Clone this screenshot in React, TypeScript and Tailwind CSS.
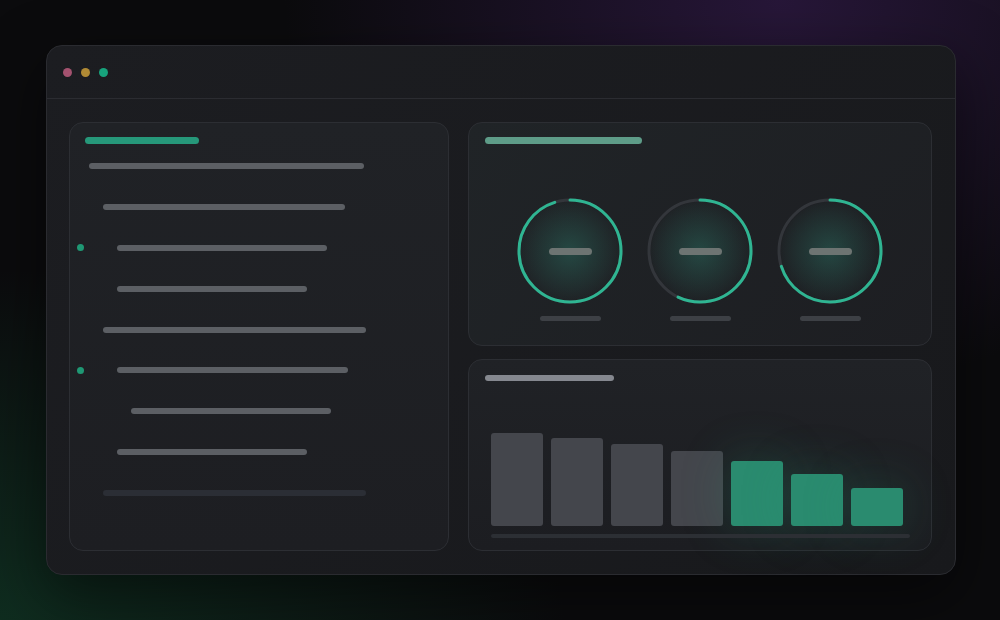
const rows = [
    { indent: 0, width: 275, dot: false },
    { indent: 14, width: 242, dot: false },
    { indent: 28, width: 210, dot: true },
    { indent: 28, width: 190, dot: false },
    { indent: 14, width: 263, dot: false },
    { indent: 28, width: 231, dot: true },
    { indent: 42, width: 200, dot: false },
    { indent: 28, width: 190, dot: false },
    { indent: 14, width: 263, dot: false, faint: true },
];

const rings = [0.95, 0.57, 0.7];

const bars = [
    { h: 93, green: false },
    { h: 88, green: false },
    { h: 82, green: false },
    { h: 75, green: false },
    { h: 65, green: true },
    { h: 52, green: true },
    { h: 38, green: true },
];

function Ring({ value }: { value: number }) {
    const r = 51;
    const c = 2 * Math.PI * r;
    return (
        <div className="relative w-[106px] h-[106px]">
            <div className="absolute inset-[4px] rounded-full bg-[radial-gradient(circle,rgba(45,125,108,0.42),rgba(45,120,105,0.12)_55%,transparent_75%)]" />
            <svg width="106" height="106" viewBox="0 0 106 106" className="absolute inset-0 -rotate-90">
                <circle cx="53" cy="53" r={r} fill="none" stroke="#33363b" strokeWidth="3" />
                <circle
                    cx="53"
                    cy="53"
                    r={r}
                    fill="none"
                    stroke="#2fb592"
                    strokeWidth="3"
                    strokeDasharray={`${c * value} ${c}`}
                    strokeLinecap="round"
                />
            </svg>
            <div className="absolute inset-0 flex items-center justify-center">
                <div className="w-[43px] h-[7px] rounded-full bg-[#6d7472]" />
            </div>
        </div>
    );
}

export default function App() {
    return (
        <div className="w-[1000px] h-[620px] overflow-hidden bg-[#0b0b0d] bg-[radial-gradient(ellipse_at_78%_0%,rgba(62,32,92,0.55),transparent_45%),radial-gradient(ellipse_at_0%_100%,rgba(18,72,46,0.55),transparent_40%)] pt-[45px] pl-[46px]">
            <div className="w-[910px] h-[530px] rounded-[16px] border border-[#2a2b30] bg-[#1a1b1e] bg-[linear-gradient(135deg,#1c1d21,#18191c)] flex flex-col shadow-[0_20px_60px_rgba(0,0,0,0.5)]">
                {/* title bar */}
                <div className="h-[53px] shrink-0 border-b border-[#2b2c31] flex items-center gap-[9px] pl-[16px]">
                    <div className="w-[9px] h-[9px] rounded-full bg-[#a4526f]" />
                    <div className="w-[9px] h-[9px] rounded-full bg-[#b08a35]" />
                    <div className="w-[9px] h-[9px] rounded-full bg-[#17a37c]" />
                </div>

                <div className="flex-1 grid grid-cols-[380px_464px] gap-[19px] pt-[23px] pl-[22px]">
                    {/* left panel */}
                    <div className="h-[429px] rounded-[14px] border border-[#2c2e33] bg-[#1f2024] bg-[linear-gradient(180deg,#202226,#1d1e22)] pt-[14px]">
                        <div className="ml-[15px] w-[114px] h-[7px] rounded-full bg-[#26987a]" />
                        <div className="mt-[2px] flex flex-col">
                            {rows.map((row, i) => (
                                <div key={i} className="h-[40.8px] flex items-center">
                                    <div className="w-[19px] shrink-0 flex pl-[7px]">
                                        {row.dot && <div className="w-[7px] h-[7px] rounded-full bg-[#1f9874]" />}
                                    </div>
                                    <div
                                        className={`h-[6px] rounded-full ${row.faint ? "bg-[#2b2e35]" : "bg-[#5c5f64]"}`}
                                        style={{ marginLeft: row.indent, width: row.width }}
                                    />
                                </div>
                            ))}
                        </div>
                    </div>

                    {/* right column */}
                    <div className="flex flex-col gap-[13px]">
                        <div className="h-[224px] rounded-[14px] border border-[#2c2e33] bg-[#1f2125] bg-[linear-gradient(135deg,#202427,#1d1e22)] pt-[14px]">
                            <div className="ml-[16px] w-[157px] h-[7px] rounded-full bg-[#5e9c88]" />
                            <div className="mt-[54px] flex justify-center gap-[24px]">
                                {rings.map((v, i) => (
                                    <div key={i} className="flex flex-col items-center">
                                        <Ring value={v} />
                                        <div className="mt-[12px] w-[61px] h-[5px] rounded-full bg-[#3d4045]" />
                                    </div>
                                ))}
                            </div>
                        </div>

                        <div className="h-[192px] rounded-[14px] border border-[#2c2e33] bg-[#1f2024] bg-[linear-gradient(180deg,#202226,#1c1d21)] pt-[15px] flex flex-col">
                            <div className="ml-[16px] w-[129px] h-[6px] rounded-full bg-[#85888f]" />
                            <div className="flex-1 flex items-end gap-[8px] pl-[22px]">
                                {bars.map((b, i) => (
                                    <div
                                        key={i}
                                        className={`w-[52px] rounded-[3px] ${
                                            b.green
                                                ? "bg-[#2a8b6f] shadow-[0_0_50px_rgba(40,150,115,0.3)]"
                                                : "bg-[#44464c]"
                                        }`}
                                        style={{ height: b.h }}
                                    />
                                ))}
                            </div>
                            <div className="mt-[8px] mb-[12px] ml-[22px] w-[419px] h-[4px] rounded-full bg-[#2c2f34]" />
                        </div>
                    </div>
                </div>
            </div>
        </div>
    );
}
